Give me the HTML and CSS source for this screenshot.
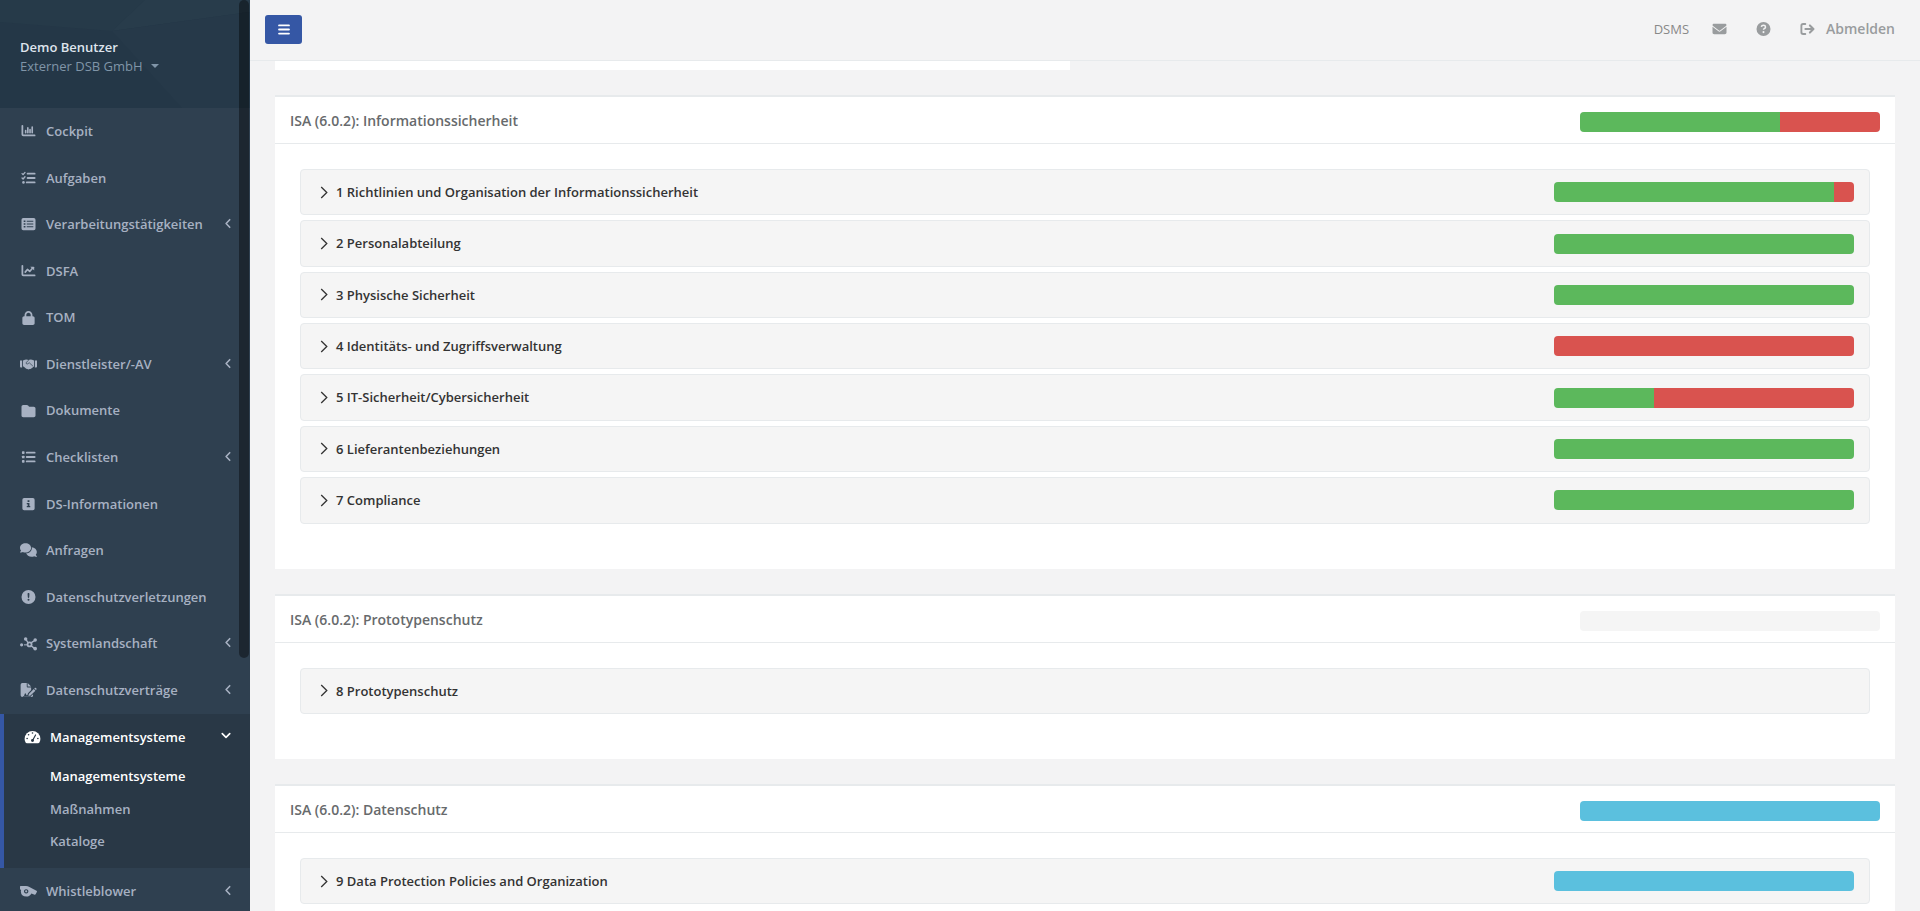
FILE: index.html
```html
<!DOCTYPE html>
<html lang="de">
<head>
    <meta charset="UTF-8">
    <meta name="viewport" content="width=device-width, initial-scale=1.0">
    <title>Managementsysteme</title>
    <link rel="stylesheet" href="styles.css">
</head>
<body>
    <svg class="sprite" aria-hidden="true">
        <symbol id="i-chart-bar" viewBox="0 0 512 512"><path d="M32 64v320q0 32 32 32h416" fill="none" stroke="currentColor" stroke-width="64" stroke-linecap="round"/><path d="M152 240v80M232 144v176M312 208v112M392 112v208" fill="none" stroke="currentColor" stroke-width="60" stroke-linecap="round"/></symbol>
        <symbol id="i-tasks" viewBox="0 0 512 512"><path d="M20 96l38 36 70-80M20 256l38 36 70-80" fill="none" stroke="currentColor" stroke-width="50" stroke-linecap="round" stroke-linejoin="round"/><path d="M224 96h256M224 256h256M192 416h288" fill="none" stroke="currentColor" stroke-width="68" stroke-linecap="round"/><circle cx="72" cy="416" r="46"/></symbol>
        <symbol id="i-table-list" viewBox="0 0 512 512"><path fill-rule="evenodd" d="M64 32h384a64 64 0 0 1 64 64v320a64 64 0 0 1-64 64H64a64 64 0 0 1-64-64V96a64 64 0 0 1 64-64zM80 132v48h64v-48zM192 136v40h240v-40zM80 232v48h64v-48zM192 236v40h240v-40zM80 332v48h64v-48zM192 336v40h240v-40z"/></symbol>
        <symbol id="i-chart-line" viewBox="0 0 512 512"><path d="M32 64v320q0 32 32 32h416" fill="none" stroke="currentColor" stroke-width="64" stroke-linecap="round"/><path d="M136 296l80-96 84 72 92-106" fill="none" stroke="currentColor" stroke-width="62" stroke-linecap="round" stroke-linejoin="round"/><path d="M320 96h120q24 0 24 24v120z"/></symbol>
        <symbol id="i-lock" viewBox="0 0 448 512"><path d="M144 144l0 48 160 0 0-48c0-44.2-35.8-80-80-80s-80 35.8-80 80zM80 192l0-48C80 64.5 144.5 0 224 0s144 64.5 144 144l0 48 16 0c35.3 0 64 28.7 64 64l0 192c0 35.3-28.7 64-64 64L64 512c-35.3 0-64-28.7-64-64L0 256c0-35.3 28.7-64 64-64l16 0z"/></symbol>
        <symbol id="i-handshake" viewBox="0 0 640 512"><path d="M0 128h80v256H32q-32 0-32-32zM640 128h-80v256h48q32 0 32-32z"/><path d="M112 128l72-32q50-24 104 0l32 12 32-12q54-24 104 0l72 32v220l-40 20q-14 54-70 56-22 28-56 22-40 34-84 2-50 0-78-38l-66-62h-22z"/><path d="M322 116l-96 92q0 62 66 44l54-44 128 116" fill="none" stroke="#2f4050" stroke-width="26" stroke-linecap="round" stroke-linejoin="round"/></symbol>
        <symbol id="i-folder" viewBox="0 0 512 512"><path d="M64 480H448c35.3 0 64-28.7 64-64V160c0-35.3-28.7-64-64-64H288c-10.1 0-19.6-4.7-25.6-12.8L243.2 57.6C231.1 41.5 212.1 32 192 32H64C28.7 32 0 60.7 0 96V416c0 35.3 28.7 64 64 64z"/></symbol>
        <symbol id="i-list" viewBox="0 0 512 512"><path d="M192 96h288M192 256h288M192 416h288" stroke="currentColor" stroke-width="68" stroke-linecap="round"/><rect x="16" y="48" width="96" height="96" rx="24"/><rect x="16" y="208" width="96" height="96" rx="24"/><rect x="16" y="368" width="96" height="96" rx="24"/></symbol>
        <symbol id="i-square-info" viewBox="0 0 448 512"><path fill-rule="evenodd" d="M64 32h320a64 64 0 0 1 64 64v320a64 64 0 0 1-64 64H64a64 64 0 0 1-64-64V96a64 64 0 0 1 64-64zM190 116v64h68v-64zM160 220v44h34v64h-34v44h128v-44h-30V220z"/></symbol>
        <symbol id="i-comments" viewBox="0 0 640 512"><path d="M208 352c114.9 0 208-78.8 208-176S322.9 0 208 0S0 78.8 0 176c0 38.6 14.7 74.3 39.6 103.4c-3.5 9.4-8.7 17.7-14.2 24.7c-4.8 6.2-9.7 11-13.3 14.3c-1.8 1.6-3.3 2.9-4.3 3.7c-.5 .4-.9 .7-1.1 .8l-.2 .2C1 327.2-1.4 334.4 .8 340.9S9.1 352 16 352c21.8 0 43.8-5.6 62.1-12.5c9.2-3.5 17.8-7.4 25.2-11.4C134.1 343.3 169.8 352 208 352zM448 176c0 112.3-99.1 196.9-216.5 207C255.8 457.4 336.4 512 432 512c38.2 0 73.9-8.7 104.7-23.9c7.5 4 16 7.9 25.2 11.4c18.3 6.9 40.3 12.5 62.1 12.5c6.9 0 13.1-4.5 15.2-11.1c2.1-6.6-.2-13.8-5.8-17.9c-8-6-16-12-24.9-22.7c-5.5-7-10.7-15.4-14.2-24.7c24.9-29 39.6-64.7 39.6-103.4c0-92.8-84.9-168.9-192.6-175.5c.4 5.1 .6 10.3 .6 15.5z"/></symbol>
        <symbol id="i-exclamation" viewBox="0 0 512 512"><path d="M256 512A256 256 0 1 0 256 0a256 256 0 1 0 0 512zm0-400c20 0 36 16 34 36l-8 116c-1 14-12 24-26 24s-25-10-26-24l-8-116c-2-20 14-36 34-36zM220 356a36 36 0 1 1 72 0 36 36 0 1 1 -72 0z"/></symbol>
        <symbol id="i-nodes" viewBox="0 0 640 512"><path d="M220 80l120 180M340 260L560 120M370 290l190 140" fill="none" stroke="currentColor" stroke-width="50"/><path d="M150 288h120" stroke="currentColor" stroke-width="40"/><circle cx="60" cy="288" r="60"/><circle cx="212" cy="72" r="66"/><circle cx="572" cy="108" r="66"/><circle cx="570" cy="430" r="70"/><circle cx="360" cy="272" r="108"/><circle cx="360" cy="272" r="42" fill="#2f4050"/></symbol>
        <symbol id="i-file-sign" viewBox="0 0 576 512"><path fill-rule="evenodd" d="M64 0h160v128q0 32 32 32h128v100L270 374l-24 74h-34l-18-56q-18-30-42 0l-28 80H80v32h304v-30l70-60v42q0 56-64 56H64Q0 512 0 448V64Q0 0 64 0z"/><path d="M256 0v128h128z"/><path d="M300 400l180-180 60 60-180 180-74 18zM500 200l22-22q20-16 38 2l18 20q16 18 0 36l-20 22z"/></symbol>
        <symbol id="i-gauge" viewBox="0 0 576 512"><path d="M288 32a288 288 0 0 1 288 288q0 64-30 124-18 36-58 36H88q-40 0-58-36Q0 384 0 320A288 288 0 0 1 288 32z"/><g fill="#293846"><circle cx="288" cy="110" r="30"/><circle cx="144" cy="172" r="30"/><circle cx="92" cy="310" r="30"/><circle cx="484" cy="310" r="30"/><circle cx="288" cy="384" r="54"/></g><path d="M300 366l100-186" stroke="#293846" stroke-width="42" stroke-linecap="round"/></symbol>
        <symbol id="i-whistle" viewBox="0 0 640 512"><path fill-rule="evenodd" d="M24 64h200q70 0 130 44l266 140q30 16 14 46l-46 88q-14 22-38 12l-120-46Q372 464 240 464 40 464 32 272q0-30 8-56L0 190V88q0-24 24-24zM232 188a82 82 0 1 0 1 0z"/><circle cx="232" cy="270" r="40"/></symbol>
        <symbol id="i-left" viewBox="0 0 320 512"><path d="M240 80L72 256l168 176" fill="none" stroke="currentColor" stroke-width="76" stroke-linecap="round" stroke-linejoin="round"/></symbol>
        <symbol id="i-down" viewBox="0 0 512 512"><path d="M64 160l192 192 192-192" fill="none" stroke="currentColor" stroke-width="84" stroke-linecap="round" stroke-linejoin="round"/></symbol>
        <symbol id="i-right" viewBox="0 0 8 14"><path d="M1 1l6 6-6 6" fill="none" stroke="currentColor" stroke-width="1.4"/></symbol>
        <symbol id="i-bars" viewBox="0 0 448 512"><path d="M28 96h392M28 256h392M28 416h392" stroke="currentColor" stroke-width="72" stroke-linecap="round"/></symbol>
        <symbol id="i-mail" viewBox="0 0 512 512"><path d="M48 64C21.5 64 0 85.5 0 112c0 15.1 7.1 29.3 19.2 38.4L236.8 313.6c11.4 8.5 27 8.5 38.4 0L492.8 150.4c12.1-9.1 19.2-23.3 19.2-38.4c0-26.5-21.5-48-48-48L48 64zM0 176L0 384c0 35.3 28.7 64 64 64l384 0c35.3 0 64-28.7 64-64l0-208L294.4 339.2c-22.8 17.1-54 17.1-76.8 0L0 176z"/></symbol>
        <symbol id="i-question" viewBox="0 0 512 512"><circle cx="256" cy="256" r="256"/><path d="M176 180q14-60 80-60 70 0 74 62 0 42-46 62-26 14-26 42" fill="none" stroke="#f3f3f4" stroke-width="56"/><circle cx="256" cy="370" r="38" fill="#f3f3f4"/></symbol>
        <symbol id="i-logout" viewBox="0 0 512 512"><path d="M176 72H96q-64 0-64 64v240q0 64 64 64h80" fill="none" stroke="currentColor" stroke-width="68" stroke-linecap="round"/><path d="M180 256h270M344 126l130 130-130 130" fill="none" stroke="currentColor" stroke-width="76" stroke-linecap="round" stroke-linejoin="round"/></symbol>
    </svg>

    <div class="wrapper">
        <aside class="sidebar">
            <div class="profile">
                <svg class="profile-bg" viewBox="0 0 250 108" preserveAspectRatio="none" aria-hidden="true">
                    <path d="M0 0h145L112 31 0 22z" fill="#263a49"/>
                    <path d="M145 0h105v12L112 31z" fill="#283c4b"/>
                    <path d="M112 31L250 12v96h-68z" fill="#263949"/>
                </svg>
                <strong class="profile-name">Demo Benutzer</strong>
                <a href="#" class="profile-company">Externer DSB GmbH <span class="caret"></span></a>
            </div>
            <nav>
                <ul class="menu">
                    <li><a href="#"><svg class="icon"><use href="#i-chart-bar"/></svg>Cockpit</a></li>
                    <li><a href="#"><svg class="icon"><use href="#i-tasks"/></svg>Aufgaben</a></li>
                    <li><a href="#"><svg class="icon"><use href="#i-table-list"/></svg>Verarbeitungstätigkeiten<svg class="arrow"><use href="#i-left"/></svg></a></li>
                    <li><a href="#"><svg class="icon"><use href="#i-chart-line"/></svg>DSFA</a></li>
                    <li><a href="#"><svg class="icon"><use href="#i-lock"/></svg>TOM</a></li>
                    <li><a href="#"><svg class="icon"><use href="#i-handshake"/></svg>Dienstleister/-AV<svg class="arrow"><use href="#i-left"/></svg></a></li>
                    <li><a href="#"><svg class="icon"><use href="#i-folder"/></svg>Dokumente</a></li>
                    <li><a href="#"><svg class="icon"><use href="#i-list"/></svg>Checklisten<svg class="arrow"><use href="#i-left"/></svg></a></li>
                    <li><a href="#"><svg class="icon"><use href="#i-square-info"/></svg>DS-Informationen</a></li>
                    <li><a href="#"><svg class="icon"><use href="#i-comments"/></svg>Anfragen</a></li>
                    <li><a href="#"><svg class="icon"><use href="#i-exclamation"/></svg>Datenschutzverletzungen</a></li>
                    <li><a href="#"><svg class="icon"><use href="#i-nodes"/></svg>Systemlandschaft<svg class="arrow"><use href="#i-left"/></svg></a></li>
                    <li><a href="#"><svg class="icon"><use href="#i-file-sign"/></svg>Datenschutzverträge<svg class="arrow"><use href="#i-left"/></svg></a></li>
                    <li class="active">
                        <a href="#"><svg class="icon"><use href="#i-gauge"/></svg>Managementsysteme<svg class="arrow"><use href="#i-down"/></svg></a>
                        <ul class="submenu">
                            <li><a href="#" class="current">Managementsysteme</a></li>
                            <li><a href="#">Maßnahmen</a></li>
                            <li><a href="#">Kataloge</a></li>
                        </ul>
                    </li>
                    <li><a href="#"><svg class="icon"><use href="#i-whistle"/></svg>Whistleblower<svg class="arrow"><use href="#i-left"/></svg></a></li>
                </ul>
            </nav>
            <div class="scroll-thumb"></div>
        </aside>

        <div class="page">
            <header class="topbar">
                <button class="toggle" type="button" aria-label="Menü"><svg><use href="#i-bars"/></svg></button>
                <div class="toplinks">
                    <span class="system">DSMS</span>
                    <a href="#" aria-label="Nachrichten"><svg><use href="#i-mail"/></svg></a>
                    <a href="#" aria-label="Hilfe"><svg><use href="#i-question"/></svg></a>
                    <a href="#" class="logout"><svg><use href="#i-logout"/></svg>Abmelden</a>
                </div>
            </header>

            <main class="content">
                <div class="previous"></div>

                <section class="panel">
                    <div class="panel-title">
                        <h2>ISA (6.0.2): Informationssicherheit</h2>
                        <div class="progress"><div class="green" style="width: 66.67%"></div><div class="red" style="width: 33.33%"></div></div>
                    </div>
                    <div class="panel-body">
                        <button class="chapter" type="button"><svg><use href="#i-right"/></svg>1 Richtlinien und Organisation der Informationssicherheit
                            <span class="progress"><span class="green" style="width: 93.33%"></span><span class="red" style="width: 6.67%"></span></span></button>
                        <button class="chapter" type="button"><svg><use href="#i-right"/></svg>2 Personalabteilung
                            <span class="progress"><span class="green" style="width: 100%"></span></span></button>
                        <button class="chapter" type="button"><svg><use href="#i-right"/></svg>3 Physische Sicherheit
                            <span class="progress"><span class="green" style="width: 100%"></span></span></button>
                        <button class="chapter" type="button"><svg><use href="#i-right"/></svg>4 Identitäts- und Zugriffsverwaltung
                            <span class="progress"><span class="red" style="width: 100%"></span></span></button>
                        <button class="chapter" type="button"><svg><use href="#i-right"/></svg>5 IT-Sicherheit/Cybersicherheit
                            <span class="progress"><span class="green" style="width: 33.33%"></span><span class="red" style="width: 66.67%"></span></span></button>
                        <button class="chapter" type="button"><svg><use href="#i-right"/></svg>6 Lieferantenbeziehungen
                            <span class="progress"><span class="green" style="width: 100%"></span></span></button>
                        <button class="chapter" type="button"><svg><use href="#i-right"/></svg>7 Compliance
                            <span class="progress"><span class="green" style="width: 100%"></span></span></button>
                    </div>
                </section>

                <section class="panel">
                    <div class="panel-title">
                        <h2>ISA (6.0.2): Prototypenschutz</h2>
                        <div class="progress"></div>
                    </div>
                    <div class="panel-body">
                        <button class="chapter" type="button"><svg><use href="#i-right"/></svg>8 Prototypenschutz
                            <span class="progress"></span></button>
                    </div>
                </section>

                <section class="panel">
                    <div class="panel-title">
                        <h2>ISA (6.0.2): Datenschutz</h2>
                        <div class="progress"><div class="blue" style="width: 100%"></div></div>
                    </div>
                    <div class="panel-body">
                        <button class="chapter" type="button"><svg><use href="#i-right"/></svg>9 Data Protection Policies and Organization
                            <span class="progress"><span class="blue" style="width: 100%"></span></span></button>
                    </div>
                </section>
            </main>
        </div>
    </div>
</body>
</html>
```
FILE: styles.css
```css
* {
    margin: 0;
    padding: 0;
    box-sizing: border-box;
}
body {
    font-family: 'Open Sans', Arial, sans-serif;
    font-size: 13px;
    line-height: 1.43;
    color: #676a6c;
    background-color: #f3f3f4;
}
a {
    color: inherit;
    text-decoration: none;
}
ul {
    list-style: none;
}
svg {
    fill: currentColor;
    flex-shrink: 0;
}
.sprite {
    position: absolute;
    width: 0;
    height: 0;
}
.wrapper {
    display: flex;
    height: 100vh;
    overflow: hidden;
}

/* Sidebar */
.sidebar {
    position: relative;
    flex: 0 0 250px;
    background-color: #2f4050;
    color: #a7b1c2;
    overflow: hidden;
}
.profile {
    position: relative;
    display: flex;
    flex-direction: column;
    align-items: flex-start;
    height: 108px;
    padding: 38px 20px 0;
    background-color: #243747;
}
.profile-bg {
    position: absolute;
    left: 0;
    top: 0;
    width: 100%;
    height: 100%;
}
.profile-name {
    position: relative;
    color: #dfe4ed;
    font-weight: 600;
}
.profile-company {
    position: relative;
    display: flex;
    align-items: center;
    gap: 8px;
    color: #8095a8;
}
.caret {
    border-top: 4px solid;
    border-left: 4px solid transparent;
    border-right: 4px solid transparent;
}
.menu a {
    display: flex;
    align-items: center;
    padding: 14px 20px;
    font-weight: 600;
}
.icon {
    width: 17px;
    height: 14px;
    margin-right: 9px;
}
.arrow {
    width: 8px;
    height: 11px;
    margin: 0 -2px 2px auto;
}
.menu .active {
    border-left: 4px solid #3557a5;
    background-color: #293846;
}
.active > a,
.menu .current {
    color: #fff;
}
.active .arrow {
    width: 10px;
    margin-right: -1px;
}
.submenu {
    padding-bottom: 10px;
}
.menu .submenu a {
    padding: 7px 10px 7px 46px;
}
.scroll-thumb {
    position: absolute;
    top: 0;
    right: 1px;
    width: 10px;
    height: 658px;
    border-radius: 7px;
    background-color: rgba(0, 0, 0, 0.4);
}

/* Top bar */
.page {
    flex: 1;
    min-width: 0;
}
.topbar {
    display: flex;
    align-items: center;
    justify-content: space-between;
    height: 61px;
    padding: 0 25px 1px 15px;
    border-bottom: 1px solid #e7eaec;
}
.toggle {
    display: flex;
    align-items: center;
    justify-content: center;
    width: 37px;
    height: 29px;
    border: none;
    border-radius: 3px;
    background-color: #3557a5;
    color: #fff;
    cursor: pointer;
}
.toggle svg {
    width: 12px;
    height: 13px;
}
.toplinks {
    display: flex;
    align-items: center;
    gap: 29px;
    color: #999c9e;
}
.toplinks a {
    display: flex;
    align-items: center;
}
.toplinks svg {
    width: 15px;
    height: 14px;
}
.system {
    margin-right: -6px;
    color: #888;
}
.toplinks .logout {
    gap: 11px;
    font-size: 14px;
    font-weight: 600;
}

/* Content */
.content {
    padding: 0 25px;
}
.previous {
    width: calc(50% - 15px);
    height: 9px;
    margin-bottom: 25px;
    background-color: #fff;
}
.panel {
    margin-bottom: 25px;
    background-color: #fff;
}
.panel-title {
    display: flex;
    align-items: flex-start;
    justify-content: space-between;
    height: 48px;
    padding: 15px 15px 0;
    border-top: 2px solid #e7eaec;
}
.panel-title h2 {
    font-size: 14px;
    font-weight: 600;
    line-height: 18px;
}
.panel-body {
    display: flex;
    flex-direction: column;
    gap: 5px;
    padding: 25px 25px 45px;
    border-top: 1px solid #e7eaec;
}
.chapter {
    display: flex;
    align-items: center;
    padding: 11px 15px;
    border: 1px solid #e7eaec;
    border-radius: 4px;
    background-color: #f5f5f5;
    color: #333;
    font-family: inherit;
    font-size: 13px;
    font-weight: 600;
    line-height: 1.72;
    text-align: left;
    cursor: pointer;
}
.chapter svg {
    width: 8px;
    height: 13px;
    margin: 0 8px 0 4px;
}
.progress {
    display: flex;
    width: 300px;
    height: 20px;
    border-radius: 4px;
    background-color: #f5f5f5;
    overflow: hidden;
}
.chapter .progress {
    margin-left: auto;
}
.green {
    background-color: #5cb85c;
}
.red {
    background-color: #d9534f;
}
.blue {
    background-color: #5bc0de;
}
```
